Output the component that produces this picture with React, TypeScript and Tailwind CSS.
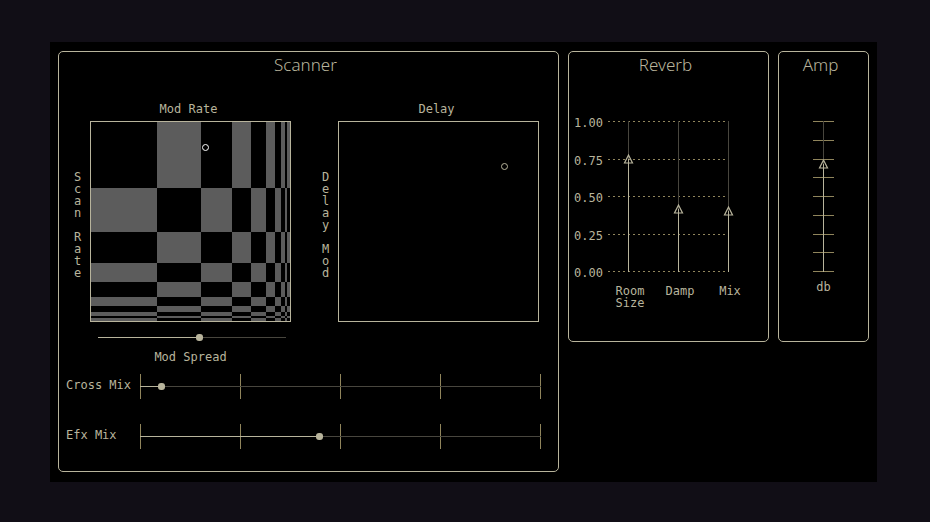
import { useState } from "react";
import type { CSSProperties, ReactNode } from "react";

const CELLS = [66, 44, 31, 19, 15, 9, 6, 4, 2, 3];
const TRACKS = CELLS.map((size) => `${size}fr`).join(" ");

type SliderProps = { label: string; initial: number };

function fillStyle(value: number): CSSProperties {
  return { "--fill": `${value * 100}%` } as CSSProperties;
}

function HorizontalSlider({ id, initial }: { id: string; initial: number }) {
  const [value, setValue] = useState(initial);
  return (
    <input
      id={id}
      type="range"
      min={0}
      max={1}
      step={0.001}
      value={value}
      onChange={(e) => setValue(Number(e.target.value))}
      style={fillStyle(value)}
      className="block h-[7px] w-full cursor-pointer appearance-none bg-[linear-gradient(to_right,#b8b49c_var(--fill),#48463e_var(--fill))] bg-[length:100%_1px] bg-center bg-no-repeat [&::-webkit-slider-thumb]:size-[7px] [&::-webkit-slider-thumb]:appearance-none [&::-webkit-slider-thumb]:rounded-[3px] [&::-webkit-slider-thumb]:bg-[#b8b49c]"
    />
  );
}

function VerticalSlider({ id, initial }: { id: string; initial: number }) {
  const [value, setValue] = useState(initial);
  return (
    <div className="relative h-[151px] w-[9px]">
      <input
        id={id}
        type="range"
        min={0}
        max={1}
        step={0.001}
        value={value}
        onChange={(e) => setValue(Number(e.target.value))}
        style={fillStyle(value)}
        className="block h-full w-full cursor-pointer appearance-none bg-[linear-gradient(to_top,#b8b49c_var(--fill),#48463e_var(--fill))] bg-[length:1px_100%] bg-center bg-no-repeat [direction:rtl] [writing-mode:vertical-lr] [&::-webkit-slider-thumb]:size-[9px] [&::-webkit-slider-thumb]:appearance-none [&::-webkit-slider-thumb]:bg-transparent"
      />
      <svg
        viewBox="0 0 9 9"
        aria-hidden="true"
        className="pointer-events-none absolute left-0 size-[9px] -translate-y-1/2 overflow-visible"
        style={{ top: `${(1 - value) * 100}%` }}
      >
        <path d="M4.5 0.5 L8.5 8.5 H0.5 Z" fill="none" stroke="#b8b49c" strokeWidth="1.2" />
      </svg>
    </div>
  );
}

function MarkedSlider({ label, initial }: SliderProps) {
  const id = label.toLowerCase().replace(" ", "-");
  return (
    <div className="flex">
      <label htmlFor={id} className="w-[74px] shrink-0 leading-[22px] whitespace-nowrap">
        {label}
      </label>
      <div className="grid h-[25px] flex-1 items-center">
        <div className="col-start-1 row-start-1 flex h-full justify-between">
          {[0, 1, 2, 3, 4].map((mark) => (
            <span key={mark} className="w-px bg-[#90855c]" />
          ))}
        </div>
        <div className="col-start-1 row-start-1">
          <HorizontalSlider id={id} initial={initial} />
        </div>
      </div>
    </div>
  );
}

type PadProps = {
  xLabel: string;
  yLabel: string;
  x: number;
  y: number;
  checkered?: boolean;
};

function XYPad({ xLabel, yLabel, x, y, checkered = false }: PadProps) {
  return (
    <div className="flex gap-2">
      <div className="mt-[70px] w-2 leading-3 whitespace-pre">{yLabel.split("").join("\n")}</div>
      <div>
        <div className="mb-1 pr-1 text-center leading-4">{xLabel}</div>
        <div className="relative size-[201px] border border-[#b8b49c]">
          {checkered && (
            <div
              className="grid h-full w-full"
              style={{ gridTemplateColumns: TRACKS, gridTemplateRows: TRACKS }}
            >
              {CELLS.map((_, row) =>
                CELLS.map((_, col) => (
                  <span
                    key={`${row}-${col}`}
                    className={(row + col) % 2 ? "bg-[#5c5c5c]" : "bg-black"}
                  />
                )),
              )}
            </div>
          )}
          <button
            type="button"
            aria-label={`${xLabel} and ${yLabel}`}
            className={`absolute size-[7px] cursor-pointer rounded-full border ${
              checkered ? "border-white" : "border-[#b8b49c]"
            }`}
            style={{ left: x, top: y }}
          />
        </div>
      </div>
    </div>
  );
}

function Panel({ title, children }: { title: string; children: ReactNode }) {
  return (
    <section className="rounded-[5px] border border-[#b8b49c]">
      <h2 className="pr-1.5 pb-0.5 text-center font-['Noto_Sans',sans-serif] text-[17px] leading-[26px] font-light">
        {title}
      </h2>
      {children}
    </section>
  );
}

const REVERB: SliderProps[] = [
  { label: "Room Size", initial: 0.75 },
  { label: "Damp", initial: 0.416 },
  { label: "Mix", initial: 0.402 },
];

export default function App() {
  return (
    <main className="min-h-screen bg-[#110e16] pt-[42px] pr-[53px] pb-10 pl-[50px] font-['DejaVu_Sans_Mono',monospace] text-[12px] text-[#b8b49c]">
      <div className="grid grid-cols-[501fr_201fr_91fr] items-start gap-[9px] bg-black px-2 pt-[9px] pb-[10px]">
        <Panel title="Scanner">
          <div className="mt-[21px] flex justify-between pr-[19px] pl-[15px]">
            <div>
              <XYPad xLabel="Mod Rate" yLabel="Scan Rate" x={111} y={22} checkered />
              <div className="mt-3 pr-[5px] pl-6">
                <HorizontalSlider id="mod-spread" initial={0.541} />
              </div>
              <label htmlFor="mod-spread" className="mt-2 block pl-4 text-center leading-4">
                Mod Spread
              </label>
            </div>
            <XYPad xLabel="Delay" yLabel="Delay Mod" x={162} y={41} />
          </div>
          <div className="mt-[9px] flex flex-col gap-[25px] pr-[17px] pb-[22px] pl-[7px]">
            <MarkedSlider label="Cross Mix" initial={0.046} />
            <MarkedSlider label="Efx Mix" initial={0.447} />
          </div>
        </Panel>

        <Panel title="Reverb">
          <div className="mt-[41px] flex gap-[5px] pl-[5px]">
            <div className="-mt-1 -mb-[7px] flex w-[29px] flex-col justify-between leading-3">
              {["1.00", "0.75", "0.50", "0.25", "0.00"].map((mark) => (
                <span key={mark}>{mark}</span>
              ))}
            </div>
            <div className="grid h-[151px] w-[121px]">
              <div className="col-start-1 row-start-1 flex flex-col justify-between">
                {[0, 1, 2, 3, 4].map((line) => (
                  <span
                    key={line}
                    className="h-px bg-[repeating-linear-gradient(to_right,#90855c_0px,#90855c_2px,transparent_2px,transparent_5px)]"
                  />
                ))}
              </div>
              <div className="col-start-1 row-start-1 -mr-1 flex justify-between pl-4">
                {REVERB.map(({ label, initial }) => (
                  <VerticalSlider key={label} id={label} initial={initial} />
                ))}
              </div>
            </div>
          </div>
          <div className="mt-[13px] flex pb-8 pl-9 text-center leading-3">
            {REVERB.map(({ label }) => (
              <label key={label} htmlFor={label} className="w-[50px] px-2">
                {label}
              </label>
            ))}
          </div>
        </Panel>

        <Panel title="Amp">
          <div className="mt-[41px] grid h-[151px] justify-items-center">
            <div className="col-start-1 row-start-1 flex w-[21px] flex-col justify-between">
              {[0, 1, 2, 3, 4, 5, 6, 7, 8].map((mark) => (
                <span key={mark} className="h-px bg-[#90855c]" />
              ))}
            </div>
            <div className="col-start-1 row-start-1">
              <VerticalSlider id="amp-db" initial={0.717} />
            </div>
          </div>
          <label htmlFor="amp-db" className="mt-[9px] block pb-12 text-center leading-3">
            db
          </label>
        </Panel>
      </div>
    </main>
  );
}
